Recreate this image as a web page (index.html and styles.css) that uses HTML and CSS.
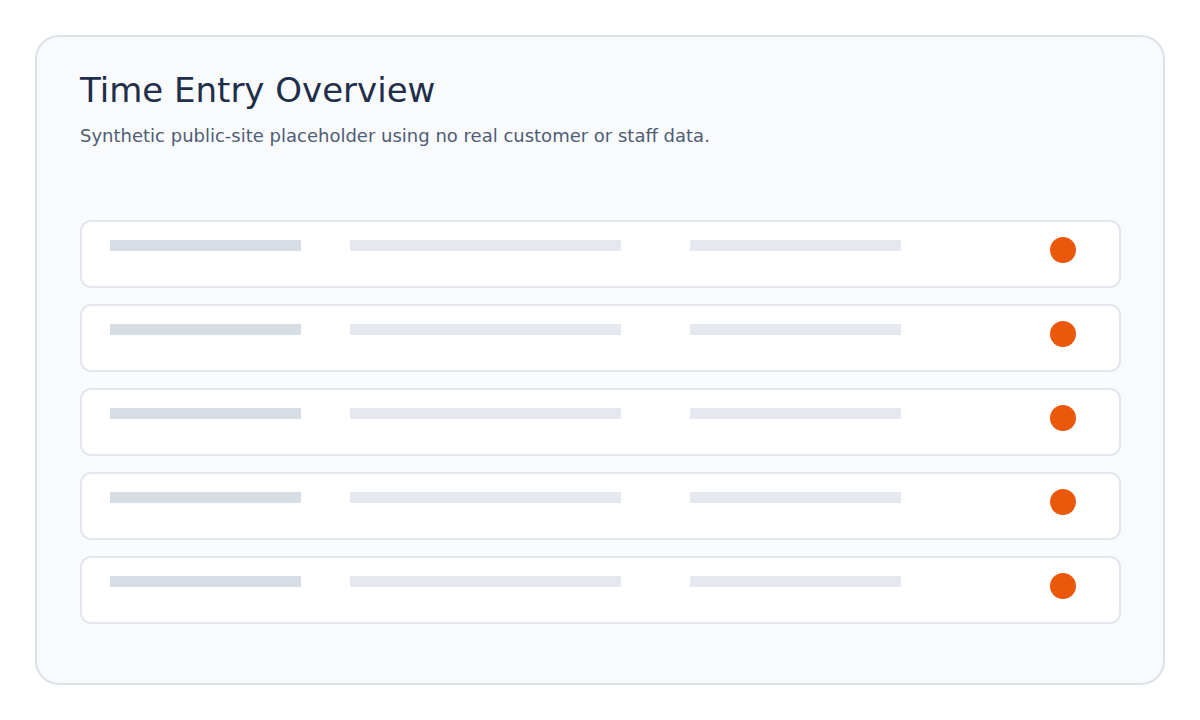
FILE: index.html
```html
<!DOCTYPE html>
<html lang="en">
<head>
    <meta charset="UTF-8">
    <meta name="viewport" content="width=device-width, initial-scale=1.0">
    <title>Time Entry Overview</title>
    <link rel="stylesheet" href="styles.css">
</head>
<body>
    <main class="panel">
        <h1>Time Entry Overview</h1>
        <p class="subtitle">Synthetic public-site placeholder using no real customer or staff data.</p>

        <div class="entries">
            <div class="entry">
                <span class="bar bar-name"></span>
                <span class="bar bar-task"></span>
                <span class="bar bar-hours"></span>
                <span class="status"></span>
            </div>
            <div class="entry">
                <span class="bar bar-name"></span>
                <span class="bar bar-task"></span>
                <span class="bar bar-hours"></span>
                <span class="status"></span>
            </div>
            <div class="entry">
                <span class="bar bar-name"></span>
                <span class="bar bar-task"></span>
                <span class="bar bar-hours"></span>
                <span class="status"></span>
            </div>
            <div class="entry">
                <span class="bar bar-name"></span>
                <span class="bar bar-task"></span>
                <span class="bar bar-hours"></span>
                <span class="status"></span>
            </div>
            <div class="entry">
                <span class="bar bar-name"></span>
                <span class="bar bar-task"></span>
                <span class="bar bar-hours"></span>
                <span class="status"></span>
            </div>
        </div>
    </main>
</body>
</html>
```

FILE: styles.css
```css
* { box-sizing: border-box; }
body { margin: 0; padding: 35px; background: #ffffff; font-family: "DejaVu Sans", Arial, sans-serif; }

.panel { height: 650px; padding: 33px 42px 0 43px; background: #f8fafc; border: 2px solid #dde2ea; border-radius: 24px; }
h1 { margin: 0; font-size: 34px; line-height: 40px; font-weight: normal; color: #1f2f4a; }
.subtitle { margin: 14px 0 0; font-size: 18px; line-height: 24px; color: #4f5d75; }

.entries { display: flex; flex-direction: column; gap: 16px; margin-top: 72px; }
.entry { display: grid; grid-template-columns: 240px 340px 360px 26px; align-items: start; height: 68px; padding: 15px 28px 0; background: #ffffff; border: 2px solid #e3e7ed; border-radius: 11px; }

/* skeleton placeholders */
.bar { display: block; height: 11px; margin-top: 3px; }
.bar-name { width: 191px; background: #d6dde5; }
.bar-task { width: 271px; background: #e5e8ee; }
.bar-hours { width: 211px; background: #e5e8ee; }
.status { width: 26px; height: 26px; border-radius: 50%; background: #ea580c; }
```
